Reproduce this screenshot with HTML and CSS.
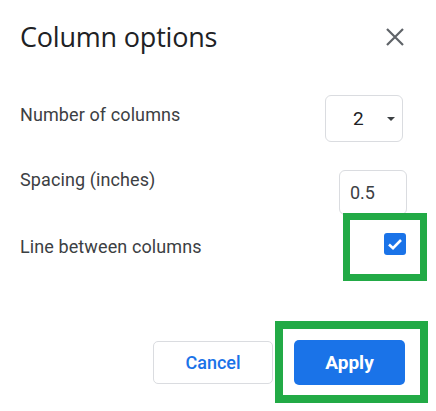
FILE: index.html
```html
<!DOCTYPE html>
<html>
<head>
<meta charset="utf-8">
<link rel="stylesheet" href="styles.css">
</head>
<body>
<div class="dialog">
  <div class="header">
    <div class="title">Column options</div>
    <svg class="close" width="20" height="20" viewBox="0 0 20 20"><path d="M2 2 L18 18 M18 2 L2 18" stroke="#5f6368" stroke-width="2.2" fill="none"/></svg>
  </div>
  <div class="row row-cols">
    <div class="label">Number of columns</div>
    <div class="select"><span class="sel-val">2</span><span class="arrow"></span></div>
  </div>
  <div class="row row-spacing">
    <div class="label">Spacing (inches)</div>
    <div class="input">0.5</div>
  </div>
  <div class="row row-line">
    <div class="label">Line between columns</div>
    <div class="hl hl-check">
      <div class="checkbox">
        <svg width="22" height="22" viewBox="0 0 22 22"><path d="M5 11.5 L9 15.2 L17 7" stroke="#fff" stroke-width="2.6" fill="none"/></svg>
      </div>
    </div>
  </div>
  <div class="actions">
    <div class="btn cancel">Cancel</div>
    <div class="hl hl-apply">
      <div class="btn apply">Apply</div>
    </div>
  </div>
</div>
</body>
</html>
```
FILE: styles.css
```css
html, body {
  margin: 0;
  padding: 0;
  background: #fff;
}
.dialog {
  width: 436px;
  height: 411px;
  box-sizing: border-box;
  padding: 19px 31px 0 20px;
  font-family: Roboto, "Liberation Sans", sans-serif;
  color: #3c4043;
  overflow: hidden;
}
.header {
  display: flex;
  justify-content: space-between;
  align-items: center;
  height: 36px;
}
.title {
  font-family: "Open Sans", sans-serif;
  font-size: 27px;
  color: #202124;
  letter-spacing: -0.2px;
  line-height: 36px;
}
.close {
  display: block;
}
.row {
  display: flex;
  justify-content: space-between;
  align-items: flex-start;
}
.label {
  font-size: 18px;
  line-height: 21px;
  letter-spacing: 0.1px;
}
.row-cols {
  margin-top: 40px;
  height: 47px;
}
.row-cols .label {
  margin-top: 9px;
}
.select {
  width: 78px;
  height: 47px;
  box-sizing: border-box;
  border: 1px solid #dadce0;
  border-radius: 6px;
  display: flex;
  align-items: center;
  margin-right: 2px;
  font-size: 19px;
  color: #202124;
}
.sel-val {
  margin-left: 27px;
}
.arrow {
  margin-left: 23px;
  width: 0;
  height: 0;
  border-left: 4px solid transparent;
  border-right: 4px solid transparent;
  border-top: 4px solid #3c4043;
}
.row-spacing {
  margin-top: 28px;
  height: 43px;
}
.row-spacing .label {
  margin-top: -1px;
}
.input {
  width: 68px;
  height: 45px;
  box-sizing: border-box;
  border: 1px solid #dadce0;
  border-radius: 6px;
  margin-right: -2px;
  padding-left: 10px;
  display: flex;
  align-items: center;
  font-size: 18px;
  color: #3c4043;
}
.row-line {
  height: 68px;
}
.row-line .label {
  margin-top: 23px;
}
.hl {
  border: 7px solid #22aa46;
  box-sizing: border-box;
  background: #fff;
  position: relative;
}
.hl-check {
  width: 84px;
  height: 68px;
  margin-right: -22px;
  display: flex;
  justify-content: flex-end;
  align-items: flex-start;
  padding: 13px 14px 0 0;
}
.checkbox {
  width: 22px;
  height: 22px;
  background: #1a73e8;
  border-radius: 3px;
}
.checkbox svg {
  display: block;
}
.actions {
  margin-top: 40px;
  display: flex;
  justify-content: flex-end;
  align-items: flex-start;
  margin-right: -23px;
}
.btn {
  box-sizing: border-box;
  display: flex;
  align-items: center;
  justify-content: center;
  font-size: 18px;
  font-weight: 500;
  border-radius: 5px;
}
.cancel {
  width: 120px;
  height: 43px;
  border: 1px solid #dadce0;
  color: #1a73e8;
  margin-top: 20px;
  margin-right: 2px;
}
.hl-apply {
  width: 153px;
  height: 82px;
  border-width: 8px;
  padding: 11px 0 0 11px;
}
.apply {
  width: 111px;
  height: 45px;
  background: #1a73e8;
  color: #fff;
  font-weight: 700;
  font-size: 19px;
}
```
